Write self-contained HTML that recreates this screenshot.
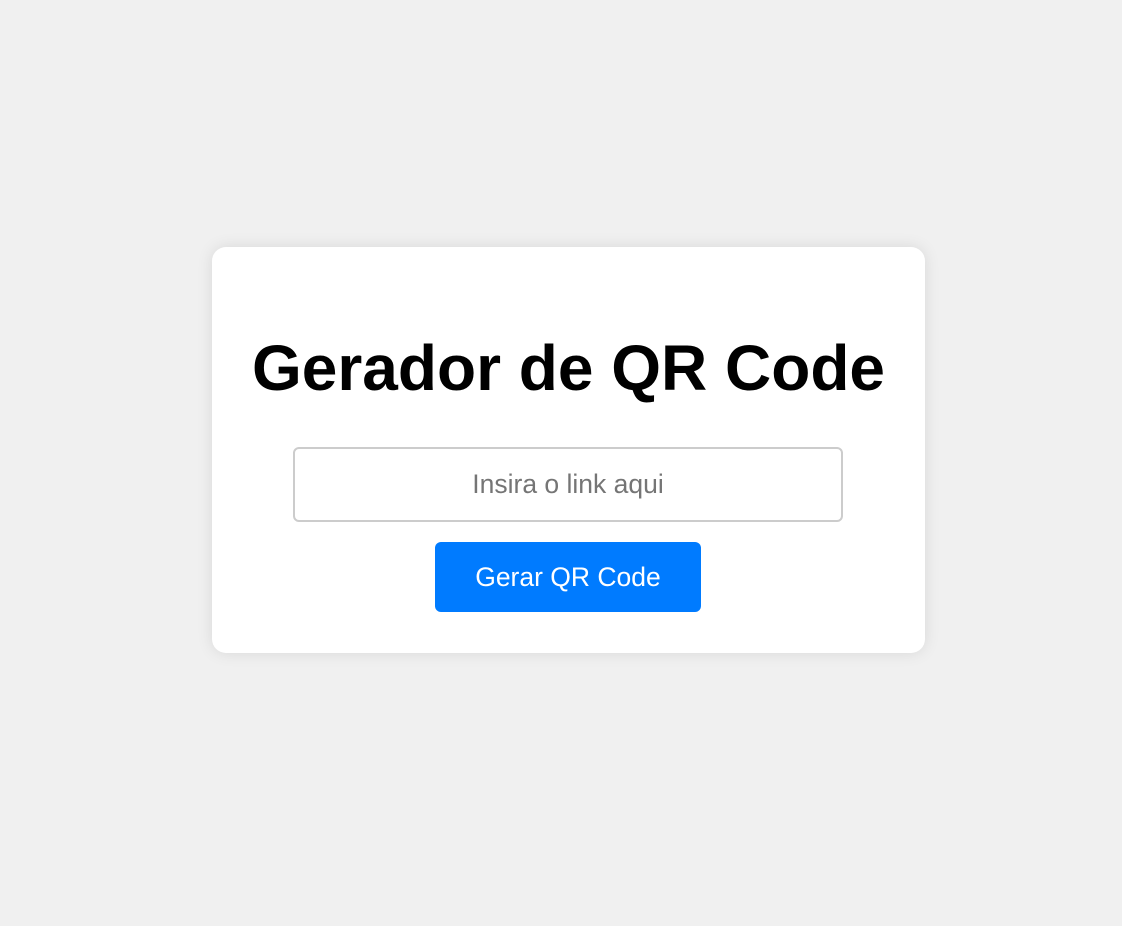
<!DOCTYPE html>
<html><head><meta charset="utf-8"><style>
html,body{margin:0;padding:0;width:1122px;height:926px;background:#f0f0f0;font-family:"Liberation Sans",Arial,sans-serif;}
.card{position:absolute;left:212px;top:247px;width:713px;height:406px;background:#fff;border-radius:14px;box-shadow:0 0 16px rgba(0,0,0,0.1);}
h1{position:absolute;left:212px;width:713px;top:336px;margin:0;text-align:center;font-size:64px;font-weight:bold;color:#000;line-height:64px;}
.inp{position:absolute;left:293px;top:447px;width:546px;height:71px;border:2px solid #ccc;border-radius:6px;}
.inp span{display:block;text-align:center;line-height:71px;font-size:26.5px;color:#757575;}
.btn{position:absolute;left:435px;top:542px;width:266px;height:70px;background:#007bff;border-radius:6px;color:#fff;font-size:26.5px;text-align:center;line-height:70px;}
</style></head><body>
<div class="card"></div>
<h1>Gerador de QR Code</h1>
<div class="inp"><span>Insira o link aqui</span></div>
<div class="btn">Gerar QR Code</div>
</body></html>
